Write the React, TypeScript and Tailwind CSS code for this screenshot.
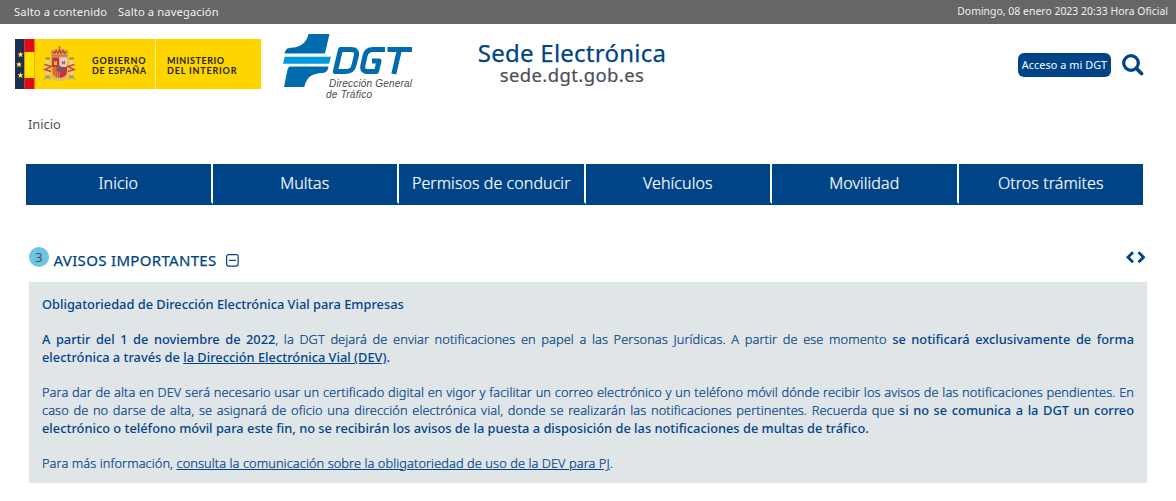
const navItems = ['Inicio', 'Multas', 'Permisos de conducir', 'Vehículos', 'Movilidad', 'Otros trámites'];

function Star({ x, y }: { x: number; y: number }) {
  return (
    <path
      transform={`translate(${x} ${y})`}
      fill="#ffe44d"
      d="M0-3.1 .8-1H3L1.3.4 1.9 2.7 0 1.4-1.9 2.7-1.3.4-3-1H-.8Z"
    />
  );
}

function CoatOfArms() {
  return (
    <g transform="translate(0 .5)">
      <path d="M35.500 17h18v18c0 4-4 6-9 6.500-5-.5-9-2.500-9-6.500Z" fill="#d9b96a" />
      <path d="M37 18h7.500v9.500H37Z" fill="#cf3038" />
      <path d="M44.500 18H52v9.500h-7.500Z" fill="#e4cfc8" />
      <path d="M37 27.500h7.500v11C40 38 37 35.500 37 32Z" fill="#e69a22" />
      <path d="M39 28v8M41.200 28v10M43.400 28v10" stroke="#c5303a" strokeWidth=".9" />
      <path d="M44.500 27.500H52V32c0 3.500-3 6-7.500 6.500Z" fill="#c63440" />
      <path d="M39 25.500v-4h1v1h1v-1h1v4Z" fill="#e8bd42" />
      <path d="M47 25v-4l1.500 1.500L50 21v4l-1.500-1Z" fill="#a95468" />
      <circle cx="44.700" cy="29.700" r="2.600" fill="#376b9b" stroke="#c73e43" />
      <path d="M36.500 16.700 35.500 13c0-2 2-3 4-2.500 1-1.500 3-2 4-1l1-1.500 1 1.500c1.200-1 3-.5 4 1 2-.5 4 .5 4 2.500l-1 3.700Z" fill="#d9a04a" />
      <path d="m37.500 12 2 2 1.500-3 2 3 1.500-4 1.500 4 2-3 1.500 3 2-2" fill="none" stroke="#cc3840" strokeWidth="1.200" />
      <path d="M37 16.500h15M44.500 6.500v3M43.500 7.500h2" stroke="#9d6b36" />
      <path d="M32.700 20v18M56.500 20v18" stroke="#d7d1bd" strokeWidth="2.600" />
      <path d="M30.500 19h4.400M54.300 19h4.400M30.500 37h4.400M54.300 37h4.400" stroke="#b48048" strokeWidth="1.800" />
      <path d="m29.500 25 6.500 2-6 3 6 2M59.500 25 53 27l6 3-6 2" fill="none" stroke="#c94a40" strokeWidth="1.700" />
      <path d="M29 39.500q3.500-2 7 0M53 39.500q3.500-2 7 0" fill="none" stroke="#a3ac96" strokeWidth="1.500" />
    </g>
  );
}

function GovernmentLogo() {
  return (
    <svg className="ml-[15px] mt-[15px] block shrink-0" width="246" height="50" viewBox="0 0 246 50" fontFamily="Lato, sans-serif">
      <path fill="#ffd500" d="M0 0h246v50H0z" />
      <path fill="#1d2f52" d="M0 0h9.500v50H0z" />
      <path fill="#e30a19" d="M9.500 0h10v50h-10z" />
      <path fill="#ffe600" d="M9.500 13h10v26h-10z" />
      <Star x={5.500} y={15.500} />
      <Star x={4} y={25.500} />
      <Star x={5.500} y={36.300} />
      <CoatOfArms />
      <path fill="#fff2a8" d="M140 0h1v50h-1z" />
      <g fill="#222222" fontSize="9" fontWeight="700">
        <text x="77" y="24.700" textLength="53.500">GOBIERNO</text>
        <text x="77" y="34.700" textLength="54">DE ESPAÑA</text>
        <text x="152" y="24.700" textLength="57">MINISTERIO</text>
        <text x="152" y="34.700" textLength="69.500">DEL INTERIOR</text>
      </g>
    </svg>
  );
}

function DgtLogo() {
  return (
    <svg className="ml-[22px] mt-[10px] block shrink-0" width="130" height="66" viewBox="0 0 130 66">
      <path fill="#006cad" d="M1.500 19.500C2.500 15.500 4 14 8 13.800 17 13 23 10 25.500 0h21l-4.500 19.500Z" />
      <path fill="#0098dc" d="M1.700 22.700H48l-2 7H0Z" />
      <path fill="#006cad" d="M7.500 32.500H45.500c-.7 4-2.200 6.200-6 6.500C29 39.300 23.500 43 21.300 53H1L4 38c1-4 1.500-5.500 3.500-5.500Z" />
      <g fill="none" stroke="#006cad" strokeWidth="5" strokeLinejoin="round">
        <path d="m57.500 15.500-5.200 22H63c5 0 7-2 8.200-7l2-8.200c1.200-5-.8-6.800-5.200-6.800Z" />
        <path d="M102 15.500H90c-4.500 0-7 2-8 6.500L80 31c-1 4.500.5 6.500 5 6.500h8.500l2.500-10.500h-7" />
        <path d="M104.500 15.500H129M116.500 15.500l-5.700 24.500" />
      </g>
      <g fill="#4a4a4a" fontFamily="Liberation Sans, sans-serif" fontStyle="italic" fontSize="10">
        <text x="46" y="53.200" textLength="83">Dirección General</text>
        <text x="43" y="63.700" textLength="46">de Tráfico</text>
      </g>
    </svg>
  );
}

function TopBar() {
  return (
    <div className="flex h-6 justify-between bg-[#666666] pl-[14px] pr-[8px] text-[#f0f0f0]">
      <div className="flex gap-[11px] text-[11.200px] leading-6 tracking-[0.120px]">
        <a>Salto a contenido</a>
        <a>Salto a navegación</a>
      </div>
      <div className="text-[10.400px] leading-[23px] tracking-[0.030px]">Domingo, 08 enero 2023 20:33 Hora Oficial</div>
    </div>
  );
}

function Header() {
  return (
    <header className="flex h-[84px] items-start">
      <GovernmentLogo />
      <DgtLogo />
      <div className="ml-[58px] mt-[13px] w-[202px] text-center">
        <h1 className="h-[26px] whitespace-nowrap text-[24px] leading-[32px] tracking-[0.240px] text-[#004488] [-webkit-text-stroke:0.250px_#004488]">Sede Electrónica</h1>
        <p className="text-[18.500px] leading-[24px] tracking-[0.400px] text-[#4b4f5c] [-webkit-text-stroke:0.200px_#4b4f5c]">sede.dgt.gob.es</p>
      </div>
      <div className="ml-auto mr-[32px] mt-[29px] flex gap-[11px]">
        <button className="flex h-6 w-[93px] items-center justify-center whitespace-nowrap rounded-[6px] bg-[#004488] pt-[1px] text-[10.800px] tracking-[0.080px] text-white">Acceso a mi DGT</button>
        <svg width="22" height="24" viewBox="0 0 22 24" fill="none" stroke="#004488">
          <circle cx="9" cy="10" r="7.300" strokeWidth="3.200" />
          <path d="m14.500 15.500 5 5" strokeWidth="3.800" strokeLinecap="round" />
        </svg>
      </div>
    </header>
  );
}

function Notice() {
  return (
    <article className="ml-[29px] mr-[29px] mt-[14px] flex h-[201px] flex-col gap-[17.600px] bg-[#e0e5e8] px-[13px] pt-[14px] text-justify text-[12.800px] font-light leading-[17.700px] tracking-[0.070px] text-[#004488] [-webkit-text-stroke:0.200px_#004488] [&_b]:font-medium [&_b]:tracking-[0.010px] [&_b]:[-webkit-text-stroke:0px]">
      <p><b>Obligatoriedad de Dirección Electrónica Vial para Empresas</b></p>
      <p>
        <b>A partir del 1 de noviembre de 2022</b>, la DGT dejará de enviar notificaciones en papel a las Personas Jurídicas. A partir de ese momento <b>se notificará exclusivamente de forma electrónica a través de <a className="underline">la Dirección Electrónica Vial (DEV)</a>.</b>
      </p>
      <p>
        Para dar de alta en DEV será necesario usar un certificado digital en vigor y facilitar un correo electrónico y un teléfono móvil dónde recibir los avisos de las notificaciones pendientes. En caso de no darse de alta, se asignará de oficio una dirección electrónica vial, donde se realizarán las notificaciones pertinentes. Recuerda que <b>si no se comunica a la DGT un correo electrónico o teléfono móvil para este fin, no se recibirán los avisos de la puesta a disposición de las notificaciones de multas de tráfico.</b>
      </p>
      <p>
        Para más información, <a className="underline">consulta la comunicación sobre la obligatoriedad de uso de la DEV para PJ</a>.
      </p>
    </article>
  );
}

export default function App() {
  return (
    <div className="h-[501px] overflow-hidden bg-white font-['Noto_Sans',sans-serif]">
      <TopBar />
      <Header />
      <div className="ml-[28px] h-[56px] pt-[7px] text-[12.800px] leading-[18px] text-[#4b4f5c]">Inicio</div>
      <nav className="ml-[26px] mr-[33px] grid h-[41px] grid-cols-[repeat(5,186.500px)_1fr] bg-[#004488] text-[16px] font-light tracking-[0.070px] text-white [-webkit-text-stroke:0.200px_white]">
        {navItems.map((item, i) => (
          <a key={item} className={`h-[40px] whitespace-nowrap text-center leading-[38px] ${i < 5 ? 'border-r-2 border-b-2 border-r-white border-b-[#004488]' : ''}`}>
            {item}
          </a>
        ))}
      </nav>
      <section className="mt-[41px] flex h-[22px] pl-[29px] pr-[29px] text-[#004488]">
        <span className="mt-[1px] h-5 w-5 rounded-full bg-[#6bc5e3] text-center text-[12.800px] leading-5 text-[#4b4f5c]">3</span>
        <h2 className="ml-[4.500px] mt-[4px] whitespace-nowrap text-[15px] leading-[20px] tracking-[0.330px] [-webkit-text-stroke:0.250px_#004488]">AVISOS IMPORTANTES</h2>
        <svg className="ml-[9px] mt-[7.500px]" width="13" height="13" viewBox="0 0 13 13" fill="none" stroke="#004488">
          <rect x=".6" y=".6" width="11.500" height="11.500" rx="2" strokeWidth="1.200" />
          <path d="M3 6.400h7" strokeWidth="1.200" />
        </svg>
        <svg className="ml-auto mr-[1px] mt-[5px]" width="20" height="13" viewBox="0 0 20 13" fill="none" stroke="#004488" strokeWidth="2.800">
          <path d="M7 1.200 2 6.200l5 5M12.500 1.200l5 5-5 5" />
        </svg>
      </section>
      <Notice />
    </div>
  );
}
